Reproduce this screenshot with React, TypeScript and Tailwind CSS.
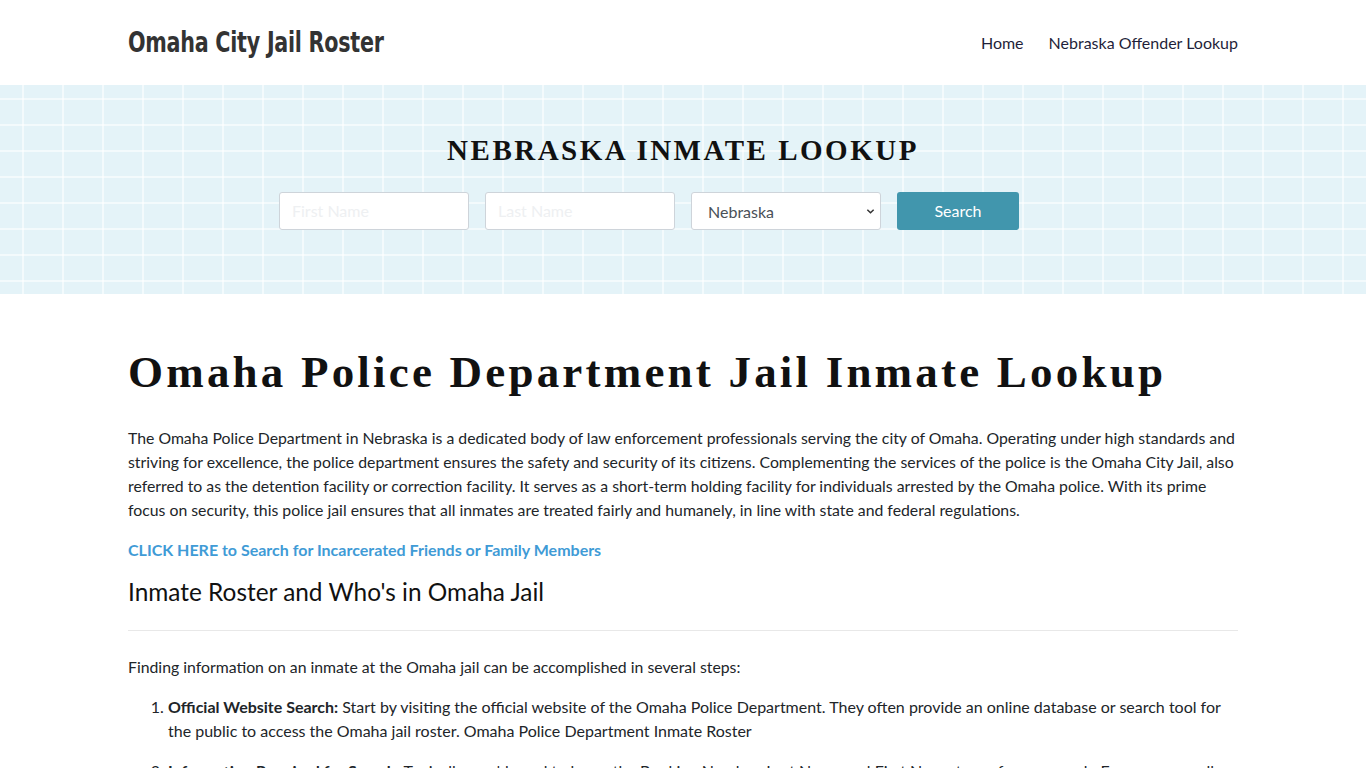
export default function App() {
  return (
    <div className="min-h-screen bg-white font-['Lato','Noto_Sans',sans-serif] text-[#212529]">
      <header className="h-[85px]">
        <div className="mx-auto flex h-full w-[1110px] items-center justify-between">
          <a className="origin-left scale-x-[0.82] font-['DejaVu_Sans_Condensed',sans-serif] text-[28px] font-bold tracking-[-0.3px] text-[#333]">
            Omaha City Jail Roster
          </a>
          <nav className="flex gap-[25px] text-[16px] text-[#1f1f3a]">
            <a>Home</a>
            <a>Nebraska Offender Lookup</a>
          </nav>
        </div>
      </header>

      <section className="h-[209px] bg-[#e4f3f8] bg-[linear-gradient(to_right,rgba(255,255,255,0.55)_2px,transparent_2px),linear-gradient(to_bottom,rgba(255,255,255,0.55)_2px,transparent_2px)] bg-[size:40px_26px] bg-[position:22px_13px]">
        <div className="mx-auto w-[1110px] pt-[44px]">
          <h2 className="text-center font-['Liberation_Serif',serif] text-[29px] font-bold tracking-[2.5px] text-[#111]">
            NEBRASKA INMATE LOOKUP
          </h2>
          <form className="mt-[19px] flex gap-[16px] pl-[151px]">
            <input
              placeholder="First Name"
              className="h-[38px] w-[190px] rounded-[3px] border border-[#ced4da] bg-white px-3 text-[16px] placeholder:text-[#eef0f2]"
            />
            <input
              placeholder="Last Name"
              className="h-[38px] w-[190px] rounded-[3px] border border-[#ced4da] bg-white px-3 text-[16px] placeholder:text-[#eef0f2]"
            />
            <div className="relative h-[38px] w-[190px] rounded-[3px] border border-[#ced4da] bg-white">
              <span className="absolute left-[16px] top-[7px] text-[16px] text-[#495057]">Nebraska</span>
              <svg className="absolute right-[5px] top-[14px]" width="9" height="9" viewBox="0 0 10 10">
                <path d="M1.5 3 L5 6.5 L8.5 3" fill="none" stroke="#333" strokeWidth="1.6" />
              </svg>
            </div>
            <button
              type="button"
              className="h-[38px] w-[122px] rounded-[3px] bg-[#4196ad] text-[16px] text-white"
            >
              Search
            </button>
          </form>
        </div>
      </section>

      <main className="mx-auto w-[1110px] pt-[52px]">
        <h1 className="font-['Liberation_Serif',serif] text-[45px] font-bold leading-[52px] tracking-[3.2px] text-[#111]">
          Omaha Police Department Jail Inmate Lookup
        </h1>
        <p className="mt-[28px] text-[15.8px] leading-[24px]">
          The Omaha Police Department in Nebraska is a dedicated body of law enforcement professionals serving the city of Omaha. Operating under high standards and striving for excellence, the police department ensures the safety and security of its citizens. Complementing the services of the police is the Omaha City Jail, also referred to as the detention facility or correction facility. It serves as a short-term holding facility for individuals arrested by the Omaha police. With its prime focus on security, this police jail ensures that all inmates are treated fairly and humanely, in line with state and federal regulations.
        </p>
        <p className="mt-[16px] text-[16px] font-bold leading-[24px] text-[#3f9bd6]">
          <a>CLICK HERE to Search for Incarcerated Friends or Family Members</a>
        </p>
        <h3 className="mt-[12px] text-[24.4px] leading-[36px] text-[#111]">
          Inmate Roster and Who's in Omaha Jail
        </h3>
        <hr className="mt-[20px] border-t border-[#e8e8e8]" />
        <p className="mt-[24px] text-[15.8px] leading-[24px]">
          Finding information on an inmate at the Omaha jail can be accomplished in several steps:
        </p>
        <ol className="mt-[16px] list-decimal pl-[40px] text-[16px] leading-[24px]">
          <li className="mb-[16px]">
            <b>Official Website Search:</b> Start by visiting the official website of the Omaha Police Department. They often provide an online database or search tool for the public to access the Omaha jail roster. Omaha Police Department Inmate Roster
          </li>
          <li className="mb-[16px]">
            <b>Information Required for Search:</b> Typically, you'd need to know the Booking Number, Last Name and First Name to perform a search. Ensure you spell names correctly for accurate results.
          </li>
        </ol>
      </main>
    </div>
  );
}
